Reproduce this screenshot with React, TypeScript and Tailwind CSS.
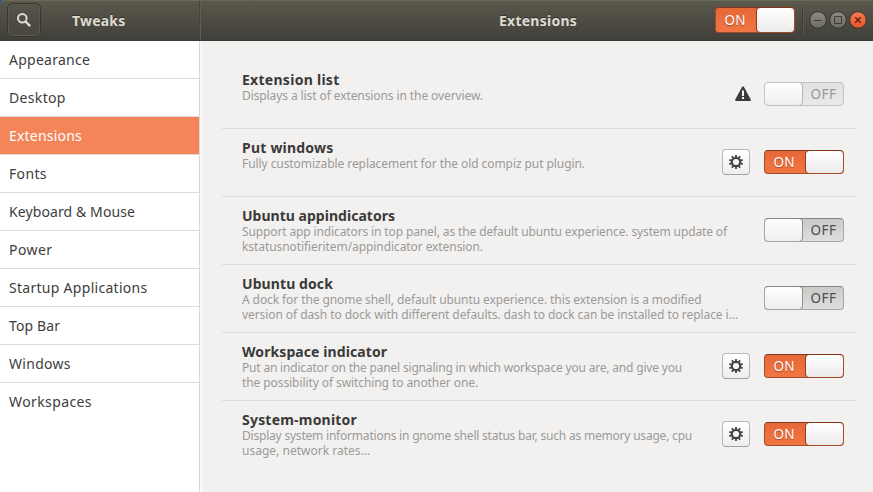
type NavItem = { label: string; tracking: string };
type Line = { text: string; tracking: string };
type Extension = {
  name: string;
  tracking: string;
  lines: Line[];
  state: 'on' | 'off' | 'disabled';
  extra?: 'gear' | 'warning';
};

const NAV: NavItem[] = [
  { label: 'Appearance', tracking: 'tracking-[0.25px]' },
  { label: 'Desktop', tracking: 'tracking-[0.34px]' },
  { label: 'Extensions', tracking: 'tracking-[0.21px]' },
  { label: 'Fonts', tracking: 'tracking-[0.35px]' },
  { label: 'Keyboard & Mouse', tracking: 'tracking-[0.1px]' },
  { label: 'Power', tracking: 'tracking-[0.43px]' },
  { label: 'Startup Applications', tracking: 'tracking-[0.286px]' },
  { label: 'Top Bar', tracking: 'tracking-[0.12px]' },
  { label: 'Windows', tracking: 'tracking-[0.29px]' },
  { label: 'Workspaces', tracking: 'tracking-[0.4px]' },
];

const EXTENSIONS: Extension[] = [
  {
    name: 'Extension list',
    tracking: 'tracking-[0.278px]',
    lines: [{ text: 'Displays a list of extensions in the overview.', tracking: 'tracking-[-0.095px]' }],
    state: 'disabled',
    extra: 'warning',
  },
  {
    name: 'Put windows',
    tracking: 'tracking-[0.218px]',
    lines: [{ text: 'Fully customizable replacement for the old compiz put plugin.', tracking: 'tracking-[-0.072px]' }],
    state: 'on',
    extra: 'gear',
  },
  {
    name: 'Ubuntu appindicators',
    tracking: 'tracking-[0.021px]',
    lines: [
      { text: 'Support app indicators in top panel, as the default ubuntu experience. system update of', tracking: 'tracking-[-0.124px]' },
      { text: 'kstatusnotifieritem/appindicator extension.', tracking: 'tracking-[-0.08px]' },
    ],
    state: 'off',
  },
  {
    name: 'Ubuntu dock',
    tracking: 'tracking-[0.086px]',
    lines: [
      { text: 'A dock for the gnome shell, default ubuntu experience. this extension is a modified', tracking: 'tracking-[-0.09px]' },
      { text: 'version of dash to dock with different defaults. dash to dock can be installed to replace i…', tracking: 'tracking-[-0.075px]' },
    ],
    state: 'off',
  },
  {
    name: 'Workspace indicator',
    tracking: 'tracking-[0.085px]',
    lines: [
      { text: 'Put an indicator on the panel signaling in which workspace you are, and give you', tracking: 'tracking-[-0.185px]' },
      { text: 'the possibility of switching to another one.', tracking: 'tracking-[-0.085px]' },
    ],
    state: 'on',
    extra: 'gear',
  },
  {
    name: 'System-monitor',
    tracking: 'tracking-[0.211px]',
    lines: [
      { text: 'Display system informations in gnome shell status bar, such as memory usage, cpu', tracking: 'tracking-[-0.206px]' },
      { text: 'usage, network rates…', tracking: 'tracking-[0.01px]' },
    ],
    state: 'on',
    extra: 'gear',
  },
];

function Switch({ state, tall = false }: { state: Extension['state']; tall?: boolean }) {
  const height = tall ? 'h-[26px]' : 'h-6';
  if (state === 'on') {
    return (
      <div className={`flex w-20 shrink-0 overflow-hidden rounded-[4px] border border-[#a34a2a] border-t-[#843618] bg-linear-to-b from-[#e76737] to-[#f17643] ${height}`}>
        <span className="flex w-[40px] items-center justify-center pr-0.5 text-[13.5px] text-white [text-shadow:0_1px_1px_#a8481f]">
          ON
        </span>
        <span className="-my-px -mr-px flex-1 rounded-[4px] border border-[#8e3d20] bg-linear-to-b from-white to-[#ecebea]" />
      </div>
    );
  }
  const off = state === 'off';
  return (
    <div
      className={`flex w-20 shrink-0 overflow-hidden rounded-[4px] border bg-linear-to-b ${height} ${
        off ? 'border-[#a5a5a4] border-t-[#858584] from-[#cacac9] to-[#dededd]' : 'border-[#c2c2c0] from-[#e3e2e0] to-[#eae9e7]'
      }`}
    >
      <span
        className={`-my-px -ml-px w-[39px] rounded-[4px] border bg-linear-to-b from-white to-[#efeeee] ${
          off ? 'border-[#8f8f8e]' : 'border-[#b4b4b3]'
        }`}
      />
      <span className={`flex flex-1 items-center justify-center pl-px text-[13.5px] tracking-[0.4px] ${off ? 'text-[#4d4d4d]' : 'text-[#979797]'}`}>
        OFF
      </span>
    </div>
  );
}

const TEETH = [0, 36, 72, 108, 144, 180, 216, 252, 288, 324];

function GearButton() {
  return (
    <div className="flex h-[26px] w-7 shrink-0 items-center justify-center rounded-[4px] border border-[#b9b8b7] border-b-[#a09f9e] bg-linear-to-b from-white to-[#efeeed]">
      <svg width="16" height="16" viewBox="0 0 16 16" fill="none" stroke="#444444">
        <circle cx="8" cy="8" r="4.2" strokeWidth="2.2" />
        {TEETH.map((angle) => (
          <path key={angle} d="M8 1v2.4" strokeWidth="1.8" transform={`rotate(${angle} 8 8)`} />
        ))}
      </svg>
    </div>
  );
}

function WarningIcon() {
  return (
    <svg width="16" height="16" viewBox="0 0 16 16" className="mr-[13px] shrink-0">
      <path d="M8 1.4 14.8 14H1.2z" fill="#3b3b3b" stroke="#3b3b3b" strokeWidth="2.2" strokeLinejoin="round" />
      <path d="M7 4.5h2V10H7zM7 11h2v2H7z" fill="#f2f1f0" />
    </svg>
  );
}

function WindowButton({ kind }: { kind: 'minimize' | 'maximize' | 'close' }) {
  const close = kind === 'close';
  return (
    <svg width="18" height="18" viewBox="0 0 18 18" fill="none" className="shrink-0">
      <defs>
        <linearGradient id={`face-${kind}`} x1="0" y1="0" x2="0" y2="1">
          <stop offset="0" stopColor={close ? '#f77b52' : '#8c8a82'} />
          <stop offset="1" stopColor={close ? '#e75423' : '#6d6b66'} />
        </linearGradient>
      </defs>
      <circle cx="9" cy="9" r="8.3" fill={`url(#face-${kind})`} stroke="#35342f" />
      {kind === 'minimize' && <path d="M5 9.5h8" stroke="#3d3c37" />}
      {kind === 'maximize' && <path d="M5.5 5.5h7v7h-7z" stroke="#3d3c37" />}
      {close && <path d="m6.2 6.2 5.6 5.6m0-5.6-5.6 5.6" stroke="#552011" strokeWidth="1.3" />}
    </svg>
  );
}

function Header() {
  return (
    <header className="flex h-[41px] shrink-0 rounded-tl-[5px] border-t border-t-[#6a6858] border-b border-b-[#3b3a36] bg-linear-to-b from-[#5b594c] to-[#403f3a] font-bold text-[#dfdbd2] text-[14px]">
      <div className="flex w-[200px] items-center border-r border-[#45443d] pl-[7px]">
        <div className="mb-px flex h-[34px] w-[34px] items-center justify-center rounded-[5px] border border-[#38372f] bg-linear-to-b from-[#55534a] to-[#47463f] shadow-[inset_0_0_0_1px_#5b594f]">
          <svg width="16" height="16" viewBox="0 0 16 16" fill="none" stroke="#dfdbd2">
            <circle cx="6.3" cy="6.3" r="4.3" strokeWidth="2" />
            <path d="m9.5 9.5 4.7 4.7" strokeWidth="2.4" />
          </svg>
        </div>
        <h1 className="ml-[31px] pb-px tracking-[0.2px] [text-shadow:0_-1px_#33322d]">Tweaks</h1>
      </div>
      <div className="flex flex-1 items-center border-l border-[#605e53]">
        <h2 className="ml-[298px] w-[216px] pb-px tracking-[0.25px] [text-shadow:0_-1px_#33322d]">Extensions</h2>
        <div className="pb-px font-normal">
          <Switch state="on" tall />
        </div>
        <div className="ml-[7px] h-7 w-0.5 border-l border-r border-l-[#3d3c36] border-r-[#5b594f]" />
        <div className="ml-[5px] flex gap-[2px] pb-px">
          <WindowButton kind="minimize" />
          <WindowButton kind="maximize" />
          <WindowButton kind="close" />
        </div>
      </div>
    </header>
  );
}

function Sidebar() {
  return (
    <nav className="w-[200px] shrink-0 border-r border-[#d9d8d7] bg-white text-[14px] text-[#3d3d3d]">
      {NAV.map(({ label, tracking }) => (
        <div
          key={label}
          className={`flex h-[38px] items-center border-b border-[#dddcdb] pl-[9px] whitespace-nowrap last:border-transparent ${
            label === 'Extensions' ? 'bg-[#f38559] text-white' : ''
          } ${tracking}`}
        >
          {label}
        </div>
      ))}
    </nav>
  );
}

function ExtensionRow({ item, last }: { item: Extension; last: boolean }) {
  return (
    <li className={`flex h-[68px] pl-5 pr-[11px] ${last ? '' : 'border-b border-[#dcdbda]'}`}>
      <div className="flex-1 whitespace-nowrap pt-[11px]">
        <h3 className={`text-[14px] leading-4 font-bold text-[#3a3a3a] ${item.tracking}`}>{item.name}</h3>
        {item.lines.map((line) => (
          <p key={line.text} className={`text-[12px] leading-[15px] text-[#9b9a99] ${line.tracking}`}>
            {line.text}
          </p>
        ))}
      </div>
      <div className="flex h-[66px] items-center">
        {item.extra === 'warning' && <WarningIcon />}
        {item.extra === 'gear' && (
          <div className="mr-3.5">
            <GearButton />
          </div>
        )}
        <Switch state={item.state} />
      </div>
    </li>
  );
}

export default function App() {
  return (
    <div className="flex h-[492px] w-[873px] flex-col overflow-hidden bg-[#385a8a] font-['Noto_Sans',sans-serif]">
      <Header />
      <div className="flex flex-1">
        <Sidebar />
        <main className="flex-1 border-l-2 border-[#f8f8f7] bg-[#f2f1f0] pt-5 pr-[18px] pl-5">
          <ul>
            {EXTENSIONS.map((item, i) => (
              <ExtensionRow key={item.name} item={item} last={i === EXTENSIONS.length - 1} />
            ))}
          </ul>
        </main>
      </div>
    </div>
  );
}
